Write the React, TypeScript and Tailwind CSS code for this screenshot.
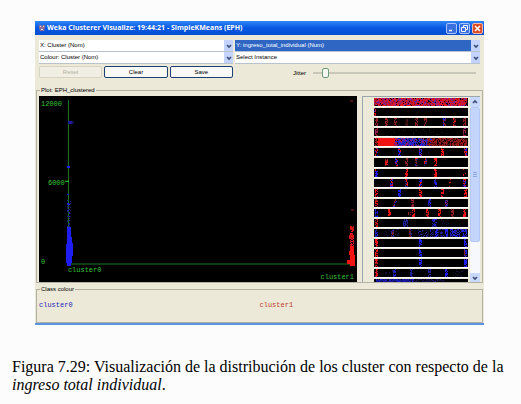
import { useState } from "react";
import type { ReactNode } from "react";

type Band = { x: number; w: number; n: number; colors: string[] };
type Dot = { x: number; y: number; fill: string };

const RED = "#f01414";
const BLUE = "#1e1ef4";
const DIM_RED = "#8c1e1e";
const DIM_BLUE = "#202098";
const PURPLE = "#96206c";

const col = (x: number, ...colors: string[]): Band => ({ x: x - 1, w: 3, n: 26, colors });
const wide = (x: number, w: number, n: number, ...colors: string[]): Band => ({ x, w, n, colors });

// One entry per attribute, top to bottom.
const ATTRIBUTES: Band[][] = [
  [wide(0, 93, 1900, RED, RED, "#d81430", "#c02060", PURPLE, "#5828b0", "#a81414")],
  [wide(0, 2, 12, RED, PURPLE, BLUE)],
  [
    col(2, DIM_RED), col(12, DIM_RED, "#a02020"), col(21, DIM_RED), col(32, "#401010"),
    col(42, DIM_RED, "#a02020"), col(51, DIM_RED), col(70, BLUE, DIM_RED), col(80, DIM_RED, RED), col(90, DIM_RED),
  ],
  [col(2, DIM_RED, PURPLE), wide(10, 80, 40, "#161616"), col(90, DIM_RED, PURPLE)],
  [
    wide(1, 3, 20, DIM_RED, RED), wide(4, 17, 900, RED), wide(20, 12, 180, RED, BLUE, PURPLE),
    wide(24, 34, 480, BLUE, DIM_BLUE, "#3030c0", PURPLE), wide(53, 40, 480, DIM_RED, "#a81818", "#501010"),
  ],
  [col(2, RED, BLUE), col(25, RED, BLUE, BLUE), col(46, BLUE, BLUE, PURPLE), col(68, RED), col(91, RED, BLUE)],
  [col(12, RED, DIM_RED), col(22, RED, BLUE), col(32, DIM_RED), col(42, DIM_RED, RED, DIM_BLUE), col(51, RED, DIM_BLUE), col(61, RED)],
  [col(2, RED, BLUE, BLUE), col(32, RED), col(61, RED), wide(89, 3, 5, RED)],
  [col(17, RED, BLUE), col(32, RED, DIM_BLUE), col(46, RED, BLUE, BLUE), col(61, BLUE, DIM_BLUE), wide(75, 2, 4, RED), col(90, RED, BLUE)],
  [col(2, RED), col(25, BLUE), col(46, RED), col(68, RED), col(91, RED)],
  [col(2, RED, DIM_RED), wide(19, 4, 12, BLUE, DIM_RED), col(38, PURPLE, DIM_RED), col(55, BLUE, DIM_BLUE), col(72, PURPLE, DIM_BLUE)],
  [
    col(2, BLUE, DIM_BLUE), col(15, RED), wide(34, 3, 6, DIM_RED), col(39, RED), col(53, RED, "#b01818"),
    col(65, RED), col(78, DIM_RED), col(90, RED),
  ],
  [col(2, RED, DIM_RED), wide(29, 5, 40, DIM_BLUE), wide(58, 5, 40, DIM_BLUE, BLUE), wide(66, 10, 14, "#14143c")],
  [
    col(2, BLUE, DIM_BLUE), wide(10, 16, 20, "#14143c"), col(18, DIM_RED, DIM_BLUE), col(36, DIM_RED, DIM_BLUE),
    wide(44, 30, 130, DIM_BLUE, "#14143c"), col(62, BLUE), col(72, BLUE), wide(76, 17, 120, BLUE, DIM_BLUE),
  ],
  [col(2, RED), col(46, BLUE), col(91, BLUE)],
  [col(2, RED), col(46, BLUE), col(91, BLUE, BLUE, DIM_RED)],
  [col(2, RED, "#b01818"), col(46, BLUE), col(91, BLUE)],
  [
    col(2, RED, DIM_RED), wide(10, 10, 12, "#14143c"), col(20, BLUE, DIM_BLUE), col(37, DIM_BLUE),
    col(55, DIM_BLUE), col(72, BLUE), wide(78, 14, 20, "#14143c"),
  ],
];

const LAST_ATTRIBUTE: Band[] = [wide(2, 38, 400, BLUE, DIM_BLUE), wide(40, 30, 80, DIM_BLUE)];

// Seeded so that the points stay put between renders (mulberry32).
function scatter(bands: Band[], height: number, seed: number): Dot[] {
  let s = seed * 7919;
  const rand = () => {
    s = (s + 0x6d2b79f5) | 0;
    let t = Math.imul(s ^ (s >>> 15), 1 | s);
    t = (t + Math.imul(t ^ (t >>> 7), 61 | t)) ^ t;
    return ((t ^ (t >>> 14)) >>> 0) / 4294967296;
  };
  return bands.flatMap((b) =>
    Array.from({ length: b.n }, () => ({
      x: b.x + Math.floor(rand() * b.w),
      y: Math.floor(rand() * height),
      fill: b.colors[Math.floor(rand() * b.colors.length)],
    }))
  );
}

function Dots({ dots }: { dots: Dot[] }) {
  return (
    <>
      {dots.map((d, i) => (
        <rect key={i} x={d.x} y={d.y} width="1" height="1" fill={d.fill} />
      ))}
    </>
  );
}

function Strip({ bands, seed }: { bands: Band[]; seed: number }) {
  return (
    <svg
      viewBox="0 0 94 8"
      preserveAspectRatio="none"
      className="block min-h-0 w-full flex-1 bg-black"
    >
      <Dots dots={scatter(bands, 8, seed)} />
    </svg>
  );
}

function Chevron({ up = false }: { up?: boolean }) {
  return (
    <svg viewBox="0 0 8 8" className="size-2" fill="none" stroke="#3c5078" strokeWidth="1.6">
      <path d={up ? "M2 5l2-2 2 2" : "M2 3l2 2 2-2"} />
    </svg>
  );
}

function Combo({ label, options, active = false }: { label: string; options: string[]; active?: boolean }) {
  return (
    <div className="relative h-3 border-b border-[#b9c3cf] bg-white">
      <select
        aria-label={label}
        className={
          "block h-full w-full appearance-none pr-3 pl-px text-[6px] leading-[11px] outline-none " +
          (active ? "bg-[#2f66c4] text-white" : "bg-white text-black")
        }
      >
        {options.map((o) => (
          <option key={o}>{o}</option>
        ))}
      </select>
      <span className="pointer-events-none absolute inset-y-0 right-0 flex w-[9px] items-center justify-center bg-[#c3d3fb]">
        <Chevron />
      </span>
    </div>
  );
}

function PushButton({ children, disabled }: { children: ReactNode; disabled?: boolean }) {
  return (
    <button
      type="button"
      disabled={disabled}
      className="h-3 flex-1 rounded-xs border border-[#1d3f74] bg-[#f8f8f4] text-[6px] leading-[9px] text-black disabled:border-[#d6d3c4] disabled:bg-[#f1efe4] disabled:text-[#b4b1a2]"
    >
      {children}
    </button>
  );
}

function TitleBar() {
  return (
    <header className="flex h-[14px] items-center gap-px bg-linear-to-b from-[#2f86f5] via-[#0757e2] to-[#0450d2] pr-px pl-[3px]">
      <svg viewBox="0 0 8 8" className="size-2">
        <path d="M1 1h2l1 1 1-1h2v3L6 7H2L1 4z" fill="#8c6f94" />
        <path d="M2 2h1v1H2zM5 2h1v1H5zM3 5h2v1H3z" fill="#f0dcdc" />
      </svg>
      <h1 className="flex-1 truncate font-['Open_Sans','Noto_Sans',sans-serif] text-[7px] font-bold text-white">
        Weka Clusterer Visualize: 19:44:21 - SimpleKMeans (EPH)
      </h1>
      <div className="flex gap-0.5">
        <button type="button" aria-label="Minimize" className="size-[11px] rounded-xs border border-[#a9c4f5] bg-[#3a6fe0]">
          <svg viewBox="0 0 9 9" className="block">
            <path d="M2 6.500h3" stroke="#fff" strokeWidth="1.500" />
          </svg>
        </button>
        <button type="button" aria-label="Restore" className="size-[11px] rounded-xs border border-[#a9c4f5] bg-[#3a6fe0]">
          <svg viewBox="0 0 9 9" className="block" fill="none" stroke="#fff">
            <path d="M3.500 3V1.500h4v4H6M1.500 3.500h4v4h-4z" />
          </svg>
        </button>
        <button type="button" aria-label="Close" className="size-[11px] rounded-xs border border-[#f0b8a8] bg-[#dc4a26]">
          <svg viewBox="0 0 9 9" className="block">
            <path d="M2 2l5 5M7 2 2 7" stroke="#fff" strokeWidth="1.500" />
          </svg>
        </button>
      </div>
    </header>
  );
}

function ClusterPlot() {
  const blue = scatter([wide(28, 4, 50, DIM_BLUE, "#14145a")], 30, 4);
  const red = scatter([wide(312, 4, 70, RED, "#b81818")], 24, 9);
  return (
    <svg viewBox="0 0 319 187" className="block min-w-0 flex-1 bg-black">
      <g fill="#1f7a22">
        <path d="M29 4h1v165h-1zM29 168h284v1H29z" />
        <path d="M26 85h4v1h-4z" fill="#2fe02f" />
      </g>
      <g fill="#35c435" fontSize="7" className="font-['Liberation_Mono',monospace]">
        <text x="2" y="10">12000</text>
        <text x="9" y="89">6000</text>
        <text x="2" y="169">0</text>
        <text x="29" y="177">cluster0</text>
        <text x="316" y="184" textAnchor="end">cluster1</text>
      </g>
      <g shapeRendering="crispEdges">
        <path d="M29 25h4v3h-4z" fill="#1c1c9a" />
        <path d="M33 25h2v3h-2z" fill="#10104c" />
        <path d="M28 70h3v2h-3zM28 98h2v1h-2zM28 107h3v2h-3z" fill={BLUE} />
        <g transform="translate(0 104)">
          <Dots dots={blue} />
        </g>
        <path d="M28 131h4v10h1v6h1v14h-1v7h-1v3h-4v-3h-1v-20h1z" fill={BLUE} />
        <path d="M312 4h3v2h-3zM313 113h3v2h-3z" fill="#4a1212" />
        <path d="M312 131h4v3h-4zM311 139h5v4h-5z" fill="#c41414" />
        <g transform="translate(0 130)">
          <Dots dots={red} />
        </g>
        <path d="M312 150h4v10h1v11h-5v-2h-3v-4h3v-5h-1z" fill={RED} />
      </g>
    </svg>
  );
}

function AttributePanel() {
  return (
    <div className="flex w-[118px] border-t border-l border-[#9aa5ae]">
      <div className="relative ml-[11px] flex-1">
        <div className="absolute inset-0 flex flex-col gap-px overflow-hidden bg-[#ece9d8] pt-px">
          {ATTRIBUTES.map((bands, i) => (
            <div key={i} className="flex min-h-0 flex-1 flex-col border-b border-white">
              <Strip bands={bands} seed={i + 1} />
            </div>
          ))}
          <div className="flex h-[3px] flex-col">
            <Strip bands={LAST_ATTRIBUTE} seed={40} />
          </div>
        </div>
      </div>
      <div className="ml-[2px] flex w-[10px] flex-col bg-[#f7f8fc]">
        <button type="button" aria-label="Scroll up" className="flex h-[10px] items-center justify-center bg-[#c9d9fb]">
          <Chevron up />
        </button>
        <div className="flex h-[135px] items-center justify-center rounded-xs border border-[#b4c8f4] bg-[#c3d5fb]">
          <svg viewBox="0 0 4 5" className="w-1" stroke="#8da7e0">
            <path d="M0 .5h4M0 2.500h4M0 4.500h4" />
          </svg>
        </div>
        <button type="button" aria-label="Scroll down" className="mt-auto flex h-[9px] items-center justify-center bg-[#c9d9fb]">
          <Chevron />
        </button>
      </div>
    </div>
  );
}

export default function App() {
  const [jitter, setJitter] = useState(6);

  return (
    <main className="min-h-screen bg-[#fcfcfc] pt-[21px] font-['Liberation_Sans',Arial,sans-serif] text-black">
      <section className="mr-[37px] ml-[35px] border-b-2 border-[#5c94e4] bg-[#ece9d8]">
        <TitleBar />

        <div className="grid grid-cols-[194fr_245fr] gap-x-[2px] px-1 pt-[5px]">
          <Combo label="X axis" options={["X: Cluster (Nom)"]} />
          <Combo label="Y axis" options={["Y: ingreso_total_individual (Num)"]} active />
          <Combo label="Colour" options={["Colour: Cluster (Nom)"]} />
          <Combo label="Instance shape" options={["Select Instance"]} />
          <div className="flex gap-[2px] pt-[2px]">
            <PushButton disabled>Reset</PushButton>
            <PushButton>Clear</PushButton>
            <PushButton>Save</PushButton>
          </div>
          <div className="flex items-center pt-1 pr-1 pl-[58px]">
            <label htmlFor="jitter" className="w-[20px] text-[6px] leading-[10px]">
              Jitter
            </label>
            <input
              id="jitter"
              type="range"
              value={jitter}
              onChange={(e) => setJitter(Number(e.target.value))}
              className="h-[10px] min-w-0 flex-1 appearance-none bg-transparent bg-[linear-gradient(#c9c7ba,#c9c7ba)] bg-[length:100%_2px] bg-center bg-no-repeat [&::-webkit-slider-thumb]:h-[10px] [&::-webkit-slider-thumb]:w-[7px] [&::-webkit-slider-thumb]:appearance-none [&::-webkit-slider-thumb]:rounded-xs [&::-webkit-slider-thumb]:border [&::-webkit-slider-thumb]:border-[#6f9a78] [&::-webkit-slider-thumb]:bg-[#f6f6f2]"
            />
          </div>
        </div>

        <fieldset className="mx-px mt-2 min-w-0 border border-[#b3b1a4] px-[2px]">
          <legend className="ml-px px-px text-[6px] leading-[8px]">Plot: EPH_clustered</legend>
          <div className="flex gap-[5px] pt-[2px]">
            <ClusterPlot />
            <AttributePanel />
          </div>
        </fieldset>

        <fieldset className="mx-px mt-[2px] min-w-0 border border-[#b3b1a4] px-[2px]">
          <legend className="ml-px px-px text-[6px] leading-[8px]">Class colour</legend>
          <div className="grid grid-cols-2 pt-2 pb-3 font-['Liberation_Mono',monospace] text-[7px] leading-[9px]">
            <span className="text-[#2222b8]">cluster0</span>
            <span className="text-[#c03a2a]">cluster1</span>
          </div>
        </fieldset>
      </section>

      <p className="mt-[33px] mr-2 ml-3 font-['Liberation_Serif','Times_New_Roman',serif] text-[16px] leading-[18px]">
        Figura 7.29: Visualización de la distribución de los cluster con respecto de la <i>ingreso total individual</i>.
      </p>
    </main>
  );
}
